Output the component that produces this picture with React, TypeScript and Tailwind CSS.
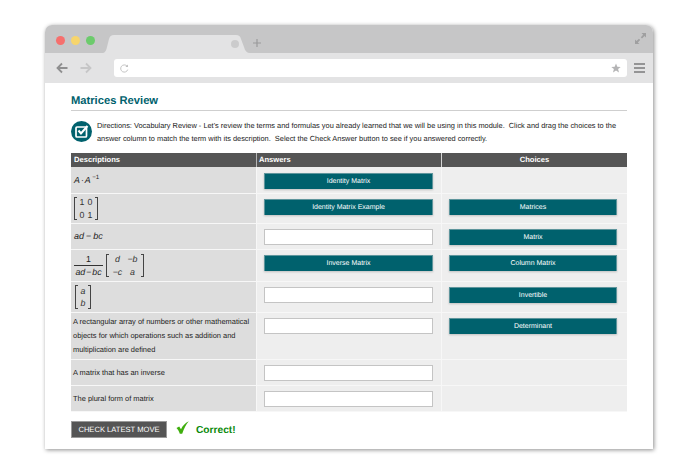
import React from "react";

const Tile = ({ t }: { t: string }) => (
  <div className="w-full h-[16px] bg-[#00616d] border border-[#5e959c] border-b-0 shadow-[0_1px_2px_rgba(0,0,0,0.2)] text-white text-[7px] leading-[16px] text-center">
    {t}
  </div>
);
const Empty = () => <div className="w-full h-[16px] bg-white border border-[#c4c4c4]" />;

const Bracket = ({ side }: { side: "l" | "r" }) => (
  <div className={side === "l" ? "w-[3px] self-stretch border-l border-t border-b border-[#444]" : "w-[3px] self-stretch border-r border-t border-b border-[#444]"} />
);

const Matrix = ({ rows, cell, h }: { rows: string[][]; cell: string; h: string }) => (
  <div className={"flex items-stretch text-[#333] " + h}>
    <Bracket side="l" />
    <div className="flex flex-col justify-center px-[1px] text-[8.8px] leading-[12.5px]">
      {rows.map((r, i) => (
        <div key={i} className="flex">
          {r.map((c, j) => (
            <span key={j} className={cell + " text-center"}>{c}</span>
          ))}
        </div>
      ))}
    </div>
    <Bracket side="r" />
  </div>
);

type Row = { h: string; pt: string; d: React.ReactNode; a: string | null; c: string | null };

const rows: Row[] = [
  {
    h: "h-[27px]",
    pt: "pt-[6px]",
    d: (
      <div className="italic text-[8.8px] flex items-start leading-[11px] mt-[1px] pl-[1px] text-[#222]">
        A<span className="not-italic mx-[1px]">·</span>A<span className="not-italic text-[6.2px] leading-[6px] ml-[1.5px]">−1</span>
      </div>
    ),
    a: "Identity Matrix",
    c: null,
  },
  {
    h: "h-[30px]",
    pt: "pt-[5px]",
    d: <Matrix rows={[["1", "0"], ["0", "1"]]} cell="w-[8px]" h="h-[23px] ml-[1px]" />,
    a: "Identity Matrix Example",
    c: "Matrices",
  },
  {
    h: "h-[26px]",
    pt: "pt-[5px]",
    d: <div className="italic text-[9px] pl-[1px] mt-[1px] text-[#222]">ad<span className="not-italic mx-[2px]">−</span>bc</div>,
    a: "",
    c: "Matrix",
  },
  {
    h: "h-[32px]",
    pt: "pt-[5px]",
    d: (
      <div className="flex items-center gap-[3px] pl-[1px] text-[#222]">
        <div className="flex flex-col items-center text-[8.8px] leading-[12px] w-[29px]">
          <span className="border-b border-[#333] w-full text-center leading-[12px]">1</span>
          <span className="italic">ad<span className="not-italic mx-[1px]">−</span>bc</span>
        </div>
        <Matrix rows={[["d", "−b"], ["−c", "a"]]} cell="w-[15px] italic" h="h-[23px]" />
      </div>
    ),
    a: "Inverse Matrix",
    c: "Column Matrix",
  },
  {
    h: "h-[31px]",
    pt: "pt-[5px]",
    d: <Matrix rows={[["a"], ["b"]]} cell="w-[7px] italic" h="h-[24px] ml-[2px] w-[16px] justify-between" />,
    a: "",
    c: "Invertible",
  },
  {
    h: "h-[47px]",
    pt: "pt-[5px]",
    d: (
      <div className="text-[7.45px] leading-[13.8px] w-[180px] text-[#222]">
        A rectangular array of numbers or other mathematical objects for which operations such as addition and multiplication are defined
      </div>
    ),
    a: "",
    c: "Determinant",
  },
  { h: "h-[26px]", pt: "pt-[5px]", d: <div className="text-[7.45px] text-[#222]">A matrix that has an inverse</div>, a: "", c: null },
  { h: "h-[26px]", pt: "pt-[5px]", d: <div className="text-[7.45px] text-[#222]">The plural form of matrix</div>, a: "", c: null },
];

export default function App() {
  return (
    <div className="w-[700px] h-[475px] bg-white pt-[25px] pl-[45px] overflow-hidden font-['Liberation_Sans',Arial,sans-serif] [text-rendering:geometricPrecision]">
      <div className="w-[608px] h-[424px] bg-white rounded-t-[7px] overflow-hidden shadow-[1px_1px_4px_rgba(0,0,0,0.45)]">
        {/* Title bar */}
        <div className="relative h-[28px] bg-[#c6c6c7] flex items-start pl-[11px] pt-[11px]">
          <div className="flex gap-[6px]">
            <div className="w-[9px] h-[9px] rounded-full bg-[#f66f6d]" />
            <div className="w-[9px] h-[9px] rounded-full bg-[#f7d56c]" />
            <div className="w-[9px] h-[9px] rounded-full bg-[#6ccb6c]" />
          </div>
          <svg className="absolute left-[57px] top-[10px]" width="148" height="18" viewBox="0 0 148 18">
            <path d="M0 18 C3 18 4 16 5 12 L7 4 C8 1 9 0 12 0 L134 0 C137 0 138 1 139 4 L142 12 C143 16 145 18 148 18 Z" fill="#e3e3e4" />
          </svg>
          <div className="absolute left-[186px] top-[15px] w-[8px] h-[8px] rounded-full bg-[#cbcbcc]" />
          <svg className="absolute left-[207px] top-[13px]" width="10" height="10" viewBox="0 0 10 10">
            <path d="M5 1 V9 M1 5 H9" stroke="#9a9a9b" strokeWidth="1.2" />
          </svg>
          <svg className="absolute left-[589px] top-[7px]" width="13" height="13" viewBox="0 0 13 13">
            <path d="M7.5 1 H12 V5.5 L10.5 4 L8 6.5 L6.8 5.2 L9.2 2.7 Z" fill="#9f9fa0" />
            <path d="M5.5 12 H1 V7.5 L2.5 9 L5 6.8 L6.2 8 L3.8 10.5 Z" fill="#9f9fa0" />
          </svg>
        </div>
        {/* Toolbar */}
        <div className="h-[30px] bg-[#e3e3e4] flex items-center pl-[11px] pr-[8px]">
          <svg width="12" height="12" viewBox="0 0 12 12">
            <path d="M11.5 6 H2 M6 1.5 L1.5 6 L6 10.5" stroke="#8f8f90" strokeWidth="1.8" fill="none" />
          </svg>
          <svg className="ml-[12px]" width="12" height="12" viewBox="0 0 12 12">
            <path d="M0.5 6 H10 M6 1.5 L10.5 6 L6 10.5" stroke="#c6c6c7" strokeWidth="1.8" fill="none" />
          </svg>
          <div className="ml-[22px] w-[513px] h-[18px] bg-white rounded-[3px] flex items-center justify-between pl-[6px] pr-[6px]">
            <svg width="9" height="9" viewBox="0 0 10 10">
              <path d="M8.6 6.2 A4 4 0 1 1 7.8 2.4" stroke="#bdbdbd" strokeWidth="1" fill="none" />
              <path d="M8.8 0.6 V3.4 H6 Z" fill="#bdbdbd" />
            </svg>
            <svg width="10" height="10" viewBox="0 0 10 10">
              <path d="M5 0.5 L6.3 3.7 L9.7 3.9 L7.1 6.1 L8 9.5 L5 7.6 L2 9.5 L2.9 6.1 L0.3 3.9 L3.7 3.7 Z" fill="#b4b4b5" />
            </svg>
          </div>
          <div className="ml-[7px] flex flex-col gap-[2.5px]">
            <div className="w-[11px] h-[1.5px] bg-[#949495]" />
            <div className="w-[11px] h-[1.5px] bg-[#949495]" />
            <div className="w-[11px] h-[1.5px] bg-[#949495]" />
          </div>
        </div>
        {/* Content */}
        <div className="pl-[26px] pr-[26px] pt-[11px]">
          <div className="text-[#00616d] font-bold text-[11.2px] leading-[14px] pb-[2px] border-b border-[#cfcfcf] h-[17px]">
            Matrices Review
          </div>
          <div className="flex mt-[10px] h-[32px]">
            <svg className="shrink-0" width="21" height="21" viewBox="0 0 21 21">
              <circle cx="10.5" cy="10.5" r="10.5" fill="#00616d" />
              <rect x="5" y="6" width="10.5" height="10" rx="1" fill="none" stroke="#fff" strokeWidth="1.7" />
              <path d="M7.5 9.5 L10 12.5 L16.5 5" fill="none" stroke="#fff" strokeWidth="2.1" />
            </svg>
            <div className="ml-[5px] text-[7.4px] leading-[13.2px] text-[#222] mt-[-2px] whitespace-pre">
              {"Directions: Vocabulary Review - Let's review the terms and formulas you already learned that we will be using in this module.  Click and drag the choices to the\nanswer column to match the term with its description.  Select the Check Answer button to see if you answered correctly."}
            </div>
          </div>
          {/* Table */}
          <div className="flex h-[14px] bg-[#555555] text-white font-bold text-[7.6px] leading-[14px]">
            <div className="w-[185px] pl-[3px]">Descriptions</div>
            <div className="w-[1px] bg-[#b5b5b5]" />
            <div className="w-[184px] pl-[2px]">Answers</div>
            <div className="w-[1px] bg-[#d5d5d5]" />
            <div className="flex-1 text-center">Choices</div>
          </div>
          <div className="flex flex-col">
            {rows.map((r, i) => (
              <div key={i} className={"flex border-b border-[#f7f7f7] " + r.h}>
                <div className="w-[185px] bg-[#dddddd] pl-[2px] flex items-center">{r.d}</div>
                <div className="w-[1px] bg-[#f7f7f7]" />
                <div className={"w-[184px] bg-[#eeeeee] pl-[7px] pr-[8px] " + r.pt}>
                  {r.a === null ? null : r.a === "" ? <Empty /> : <Tile t={r.a} />}
                </div>
                <div className="w-[1px] bg-[#f7f7f7]" />
                <div className={"flex-1 bg-[#eeeeee] pl-[7px] pr-[10px] " + r.pt}>
                  {r.c ? <Tile t={r.c} /> : null}
                </div>
              </div>
            ))}
          </div>
          {/* Footer */}
          <div className="flex items-center mt-[8px] h-[18px]">
            <div className="w-[96px] h-[17px] bg-[#555555] border border-[#9a9a9a] text-white text-[7.6px] leading-[15px] text-center">
              CHECK LATEST MOVE
            </div>
            <svg className="ml-[9px] mt-[-3px]" width="13" height="13" viewBox="0 0 13 13">
              <path d="M0.5 7 L3.2 5.5 L5 8.2 C6.5 5 9 2.2 12.8 0.3 C10 3.5 8 7.5 6.2 12.7 L3.8 12.7 C3 10.5 2 8.5 0.5 7 Z" fill="#3fae0e" />
            </svg>
            <div className="ml-[7px] mt-[3px] text-[#0a8a0a] font-bold text-[10.2px]">Correct!</div>
          </div>
        </div>
      </div>
    </div>
  );
}
